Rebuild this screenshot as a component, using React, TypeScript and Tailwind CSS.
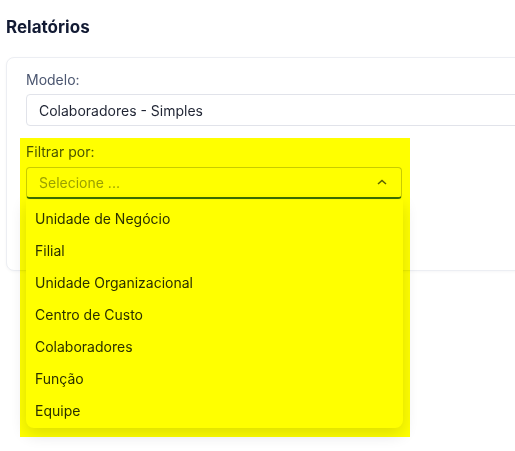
import React from 'react';

const filtros = [
  'Unidade de Negócio',
  'Filial',
  'Unidade Organizacional',
  'Centro de Custo',
  'Colaboradores',
  'Função',
  'Equipe',
];

const App: React.FC = () => {
  return (
    <div
      className="relative w-[515px] h-[451px] overflow-hidden bg-white"
      style={{ fontFamily: 'Inter, "Noto Sans", sans-serif' }}
    >
      <div className="pl-[6px] pt-[15px]">
        <h1 className="text-[17px] leading-6 font-bold text-[#121a33]">Relatórios</h1>

        <div className="mt-[18px] w-[640px] h-[214px] rounded-lg border border-[#eceef3] bg-white shadow-[0_1px_3px_rgba(15,23,42,0.04)] pl-[19px] pt-[12px]">
          {/* modelo do relatório */}
          <label className="block text-[14px] leading-5 text-[#4b5670]">Modelo:</label>
          <div className="mt-[4px] h-[32px] rounded border border-[#e1e3ea] flex items-center pl-[12px] text-[14px] text-[#1f2433]">
            Colaboradores - Simples
          </div>

          {/* filtro */}
          <div className="relative mt-[16px] w-[376px]">
            <label className="block text-[14px] leading-5 text-[#4b5670]">Filtrar por:</label>
            <div className="mt-[5px] h-[32px] rounded border border-[#c9ccd6] border-b-2 border-b-[#3b6fe0] flex items-center justify-between pl-[12px] pr-[14px] text-[14px] text-[#9aa0ad]">
              <span>Selecione ...</span>
              <svg width="10" height="6" viewBox="0 0 10 6" fill="none" className="mb-[2px]">
                <polyline points="1,5 5,1.5 9,5" stroke="#5a6072" strokeWidth="1.5" />
              </svg>
            </div>

            <ul className="absolute left-0 top-[58px] w-[377px] py-[2px] rounded-b-lg bg-white shadow-[0_6px_16px_rgba(15,23,42,0.14)] z-10">
              {filtros.map((item) => (
                <li key={item} className="h-[32px] flex items-center pl-[9px] text-[14px] text-[#2b3040]">
                  {item}
                </li>
              ))}
            </ul>
          </div>
        </div>
      </div>

      {/* realce */}
      <div className="absolute left-[20px] top-[138px] w-[390px] h-[299px] bg-[#ffff00] mix-blend-multiply z-20 pointer-events-none" />
    </div>
  );
};

export default App;
